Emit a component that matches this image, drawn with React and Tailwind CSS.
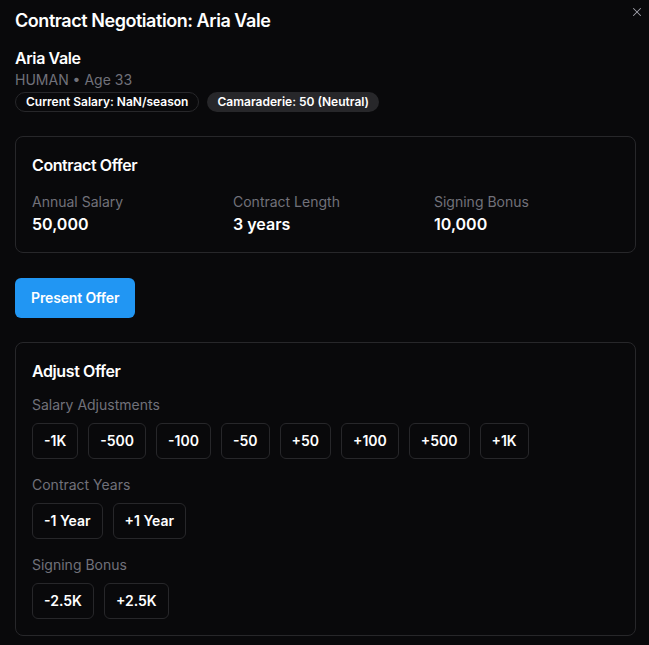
import { X } from 'lucide-react';

const salarySteps = ['-1K', '-500', '-100', '-50', '+50', '+100', '+500', '+1K'];
const yearSteps = ['-1 Year', '+1 Year'];
const bonusSteps = ['-2.5K', '+2.5K'];

function StepButton({ label }) {
  return (
    <button className="h-9 px-[11px] rounded-md border border-[#27272a] bg-[#09090b] text-sm font-semibold text-white hover:bg-[#18181b]">
      {label}
    </button>
  );
}

function StepGroup({ title, steps, className = '' }) {
  return (
    <div className={className}>
      <p className="text-sm text-[#71717a] leading-5">{title}</p>
      <div className="mt-2 flex flex-wrap gap-[10px]">
        {steps.map((s) => (
          <StepButton key={s} label={s} />
        ))}
      </div>
    </div>
  );
}

export default function App() {
  const offer = [
    { label: 'Annual Salary', value: '50,000' },
    { label: 'Contract Length', value: '3 years' },
    { label: 'Signing Bonus', value: '10,000' },
  ];

  return (
    <div className="min-h-screen bg-[#09090b] text-white font-['Inter',sans-serif]">
      <div className="relative pl-[15px] pr-[13px] pt-[7px] pb-4">
        <button className="absolute right-[5px] top-[5px] text-[#a1a1aa] hover:text-white">
          <X size={14} strokeWidth={1.75} />
        </button>

        <h2 className="text-lg font-semibold leading-7 tracking-tight">Contract Negotiation: Aria Vale</h2>

        {/* Jugador */}
        <div className="mt-[11px]">
          <p className="text-base font-semibold leading-6 tracking-tight">Aria Vale</p>
          <p className="text-sm text-[#71717a] leading-5">HUMAN • Age 33</p>
          <div className="mt-[2px] flex items-center gap-2">
            <span className="h-5 inline-flex items-center px-2.5 rounded-full border border-[#27272a] text-xs font-semibold">
              Current Salary: NaN/season
            </span>
            <span className="h-5 inline-flex items-center px-2.5 rounded-full bg-[#27272a] text-xs font-semibold">
              Camaraderie: 50 (Neutral)
            </span>
          </div>
        </div>

        {/* Oferta actual */}
        <div className="mt-6 rounded-lg border border-[#27272a] p-4">
          <h3 className="text-base font-semibold leading-6 tracking-tight">Contract Offer</h3>
          <div className="mt-[15px] grid grid-cols-3 gap-4">
            {offer.map((o) => (
              <div key={o.label}>
                <p className="text-sm text-[#71717a] leading-5">{o.label}</p>
                <p className="text-base font-semibold leading-6">{o.value}</p>
              </div>
            ))}
          </div>
        </div>

        <button className="mt-[25px] h-10 px-4 rounded-md bg-[#2196f3] text-sm font-semibold tracking-[-0.01em] text-white hover:bg-[#1e88e5]">
          Present Offer
        </button>

        {/* Ajustes */}
        <div className="mt-6 rounded-lg border border-[#27272a] p-4">
          <h3 className="text-base font-semibold leading-6 tracking-tight">Adjust Offer</h3>
          <StepGroup className="mt-3" title="Salary Adjustments" steps={salarySteps} />
          <StepGroup className="mt-4" title="Contract Years" steps={yearSteps} />
          <StepGroup className="mt-4" title="Signing Bonus" steps={bonusSteps} />
        </div>
      </div>
    </div>
  );
}
